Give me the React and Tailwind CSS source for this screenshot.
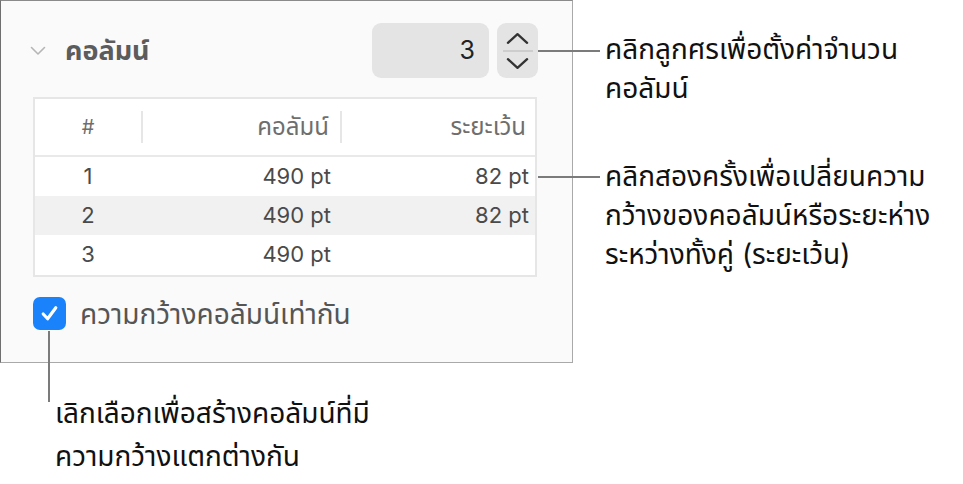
import React from "react";

const rows = [
  { n: "1", width: "490 pt", gap: "82 pt", shade: false },
  { n: "2", width: "490 pt", gap: "82 pt", shade: true },
  { n: "3", width: "490 pt", gap: "", shade: false },
];

function Chevron({ up, className }) {
  return (
    <svg viewBox="0 0 24 12" className={className} fill="none">
      <path
        d={up ? "M2 11 L12 2 L22 11" : "M2 1 L12 10 L22 1"}
        stroke="currentColor"
        strokeWidth="2.4"
        strokeLinecap="round"
        strokeLinejoin="round"
      />
    </svg>
  );
}

export default function App() {
  return (
    <div
      className="relative w-[963px] h-[484px] bg-white overflow-hidden"
      style={{ fontFamily: "Inter, 'Noto Sans Thai', 'Noto Sans', 'Liberation Sans', sans-serif" }}
    >
      <div className="flex">
        {/* Inspector panel and the note beneath it */}
        <div className="w-[573px] shrink-0">
          <section className="h-[363px] bg-[#fafafa] border border-[#a9a9a9] border-l-[#6f6f6f] border-t-[#8a8a8a]">
            {/* Section header with stepper */}
            <div className="flex items-center h-[55px] mt-[22px] pl-[29px] pr-[34px]">
              <svg viewBox="0 0 16 10" className="w-[16px] h-[10px] text-[#b5b5b5]" fill="none">
                <path d="M1.5 1.5 L8 8 L14.5 1.5" stroke="currentColor" strokeWidth="1.6" strokeLinecap="round" strokeLinejoin="round" />
              </svg>
              <h2 className="ml-[19px] text-[27px] font-bold text-[#5c5c5c] leading-none">คอลัมน์</h2>
              <div className="ml-auto flex h-full gap-[8px]">
                <div className="w-[117px] h-full rounded-[9px] bg-[#e4e4e4] flex items-center justify-end pr-[14px] text-[25px] text-[#222]">
                  3
                </div>
                <div className="w-[41px] h-full rounded-[9px] bg-[#e4e4e4] flex flex-col items-center justify-center">
                  <Chevron up className="w-[23px] h-[12px] text-[#333]" />
                  <div className="w-[30px] h-[2px] bg-[#cdcdcd] my-[6px]" />
                  <Chevron className="w-[23px] h-[12px] text-[#333]" />
                </div>
              </div>
            </div>

            {/* Column table */}
            <div className="mt-[19px] ml-[32px] w-[504px] h-[180px] bg-white border-2 border-[#e6e6e6] text-[#4a4a4a]">
              <div className="flex items-center h-[58px] border-b-2 border-[#e9e9e9] text-[24px] leading-none text-[#6e6e6e]">
                <div className="w-[106px] text-center text-[20px]">#</div>
                <div className="w-[2px] h-[32px] bg-[#e6e6e6]" />
                <div className="w-[197px] text-right pr-[11px]">คอลัมน์</div>
                <div className="w-[2px] h-[32px] bg-[#e6e6e6]" />
                <div className="flex-1 text-right pr-[9px]">ระยะเว้น</div>
              </div>
              {rows.map((r) => (
                <div
                  key={r.n}
                  className={`flex items-center h-[39px] text-[22px] ${r.shade ? "bg-[#f1f1f1]" : ""}`}
                >
                  <div className="w-[106px] text-center">{r.n}</div>
                  <div className="w-[199px] text-right pr-[9px]">{r.width}</div>
                  <div className="flex-1 text-right pr-[6px]">{r.gap}</div>
                </div>
              ))}
            </div>

            {/* Equal width checkbox */}
            <label className="flex items-center mt-[20px] ml-[32px] gap-[14px]">
              <span className="w-[33px] h-[33px] rounded-[7px] bg-[#1a82fb] flex items-center justify-center">
                <svg viewBox="0 0 20 20" className="w-[21px] h-[21px]" fill="none">
                  <path d="M4 10.5 L8.2 15 L16 4.5" stroke="white" strokeWidth="3" strokeLinecap="round" strokeLinejoin="round" />
                </svg>
              </span>
              <span className="text-[28px] leading-none text-[#555]">ความกว้างคอลัมน์เท่ากัน</span>
            </label>
          </section>

          <p className="ml-[55px] mt-[29px] text-[28px] leading-[43px] text-[#111]">
            เลิกเลือกเพื่อสร้างคอลัมน์ที่มี
            <br />
            ความกว้างแตกต่างกัน
          </p>
        </div>

        {/* Callout notes */}
        <div className="ml-[32px] pt-[30px] text-[28px] leading-[39px] text-[#111]">
          <p>
            คลิกลูกศรเพื่อตั้งค่าจำนวน
            <br />
            คอลัมน์
          </p>
          <p className="mt-[49px]">
            คลิกสองครั้งเพื่อเปลี่ยนความ
            <br />
            กว้างของคอลัมน์หรือระยะห่าง
            <br />
            ระหว่างทั้งคู่ (ระยะเว้น)
          </p>
        </div>
      </div>

      {/* Callout leader lines */}
      <div className="absolute left-[538px] top-[50px] w-[62px] h-[2px] bg-[#7b7b7b]" />
      <div className="absolute left-[538px] top-[176px] w-[62px] h-[2px] bg-[#7b7b7b]" />
      <div className="absolute left-[48px] top-[331px] w-[2px] h-[71px] bg-[#7b7b7b]" />
    </div>
  );
}
